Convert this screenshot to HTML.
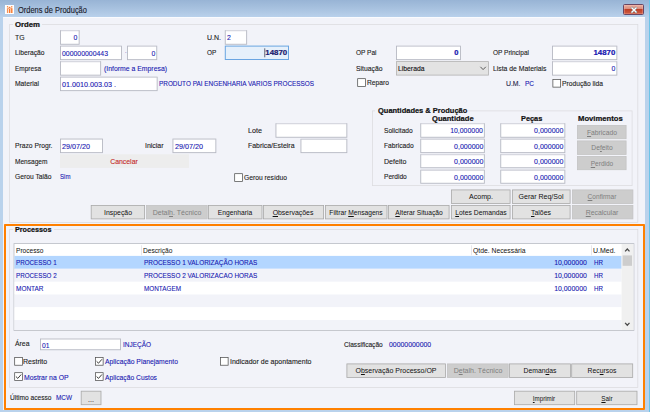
<!DOCTYPE html>
<html><head><meta charset="utf-8"><title>Ordens de Produção</title>
<style>
html,body{margin:0;padding:0;}
body{width:650px;height:412px;overflow:hidden;position:relative;background:#f2f3f9;font-family:"Liberation Sans",sans-serif;font-size:8px;line-height:10px;}
.win{position:absolute;left:0;top:0;width:650px;height:412px;background:#b9d2ec;overflow:hidden;}
.title{position:absolute;left:0;top:0;width:650px;height:17.2px;background:linear-gradient(#98b4d5,#a6c0de 45%,#b9d1eb);}
.client{position:absolute;left:3.3px;top:17.2px;width:642.2px;height:391.8px;background:#f2f3f9;border-top:0.8px solid #fafbfe;}
.redge{position:absolute;left:649px;top:0;width:1px;height:412px;background:#6cc4e8;}
.t{position:absolute;white-space:nowrap;font-size:8px;line-height:10px;-webkit-text-stroke:0.12px currentColor;}
.t u{text-decoration-thickness:0.5px;text-underline-offset:0.5px;}
.shapes{position:absolute;left:0;top:0;}
.orange{position:absolute;left:4px;top:224.4px;width:641.2px;height:185.6px;box-sizing:border-box;border:2.1px solid #ff8000;border-radius:0.8px;}
.close{position:absolute;left:623.4px;top:4px;width:20.6px;height:11.4px;box-sizing:border-box;border:0.8px solid #6b4560;border-radius:1.5px;background:linear-gradient(#eab0a2,#d98a7a 46%,#bf4027 50%,#cd5c44);box-shadow:inset 0 0 0 0.6px rgba(255,200,190,0.5);}
.icon{position:absolute;left:5px;top:4.9px;width:9.3px;height:9.1px;background:#fff;}
</style></head><body>
<div class="win">
<div class="title"></div>
<div class="client"></div><div class="redge"></div>
<div class="icon"><svg style="position:absolute;left:0;top:0" width="9.3" height="9.1" viewBox="0 0 9.3 9.1"><g fill="#f8772a"><rect x="1.9" y="1.2" width="1.3" height="1.2"/><rect x="4.0" y="1.8" width="1.3" height="1.2"/><rect x="6.1" y="1.2" width="1.3" height="1.2"/><rect x="1.9" y="3.2" width="1.4" height="4.8" opacity="0.8"/><rect x="4.0" y="3.6" width="1.4" height="4.4"/><rect x="6.1" y="3.2" width="1.4" height="4.8"/><rect x="3.0" y="2.6" width="1.2" height="1.2" opacity="0.7"/><rect x="5.2" y="2.6" width="1.2" height="1.2" opacity="0.7"/></g></svg></div>
<span class="t" style="left:17.5px;top:4.2px;font-size:9px;line-height:12px;color:#1a1a2a;transform:scaleX(0.83);transform-origin:0 50%">Ordens de Produção</span>
<div class="close"><svg style="position:absolute;left:5.6px;top:1.3px" width="8" height="8" viewBox="0 0 8 8"><path d="M1.3 1.3 L6.7 6.7 M6.7 1.3 L1.3 6.7" stroke="#777" stroke-width="2.3" fill="none"/><path d="M1.5 1.5 L6.5 6.5 M6.5 1.5 L1.5 6.5" stroke="#fff" stroke-width="1.4" fill="none"/></svg></div>
<svg class="shapes" width="650" height="412" viewBox="0 0 650 412">
<rect x="9.60" y="24.40" width="628.20" height="198.20" fill="none" stroke="#dcdce0" stroke-width="0.8"/>
<rect x="9.60" y="229.40" width="628.20" height="158.20" fill="none" stroke="#dcdce0" stroke-width="0.8"/>
<rect x="372.40" y="110.90" width="259.70" height="74.70" fill="none" stroke="#dcdce0" stroke-width="0.8"/>
<rect x="13.00" y="20.00" width="29.00" height="9.00" fill="#f2f3f9"/>
<rect x="60.45" y="30.65" width="18.70" height="13.60" fill="#fff" stroke="#b6b8c2" stroke-width="0.9"/>
<rect x="60.90" y="30.20" width="17.80" height="0.90" fill="#dcdde4"/>
<rect x="60.45" y="46.15" width="61.00" height="13.50" fill="#fff" stroke="#b6b8c2" stroke-width="0.9"/>
<rect x="60.90" y="45.70" width="60.10" height="0.90" fill="#dcdde4"/>
<rect x="127.45" y="46.15" width="29.30" height="13.50" fill="#fff" stroke="#b6b8c2" stroke-width="0.9"/>
<rect x="127.90" y="45.70" width="28.40" height="0.90" fill="#dcdde4"/>
<rect x="60.45" y="61.65" width="40.20" height="13.50" fill="#fff" stroke="#b6b8c2" stroke-width="0.9"/>
<rect x="60.90" y="61.20" width="39.30" height="0.90" fill="#dcdde4"/>
<rect x="60.45" y="77.15" width="96.70" height="13.50" fill="#fff" stroke="#b6b8c2" stroke-width="0.9"/>
<rect x="60.90" y="76.70" width="95.80" height="0.90" fill="#dcdde4"/>
<rect x="225.25" y="30.65" width="21.40" height="13.60" fill="#fff" stroke="#b6b8c2" stroke-width="0.9"/>
<rect x="225.70" y="30.20" width="20.50" height="0.90" fill="#dcdde4"/>
<rect x="225.30" y="46.10" width="63.20" height="13.40" fill="#e6f0fb" stroke="#6aa5e2" stroke-width="1.0"/>
<rect x="264.4" y="48.3" width="0.8" height="9" fill="#445"/>
<rect x="396.45" y="46.15" width="64.00" height="13.50" fill="#fff" stroke="#b6b8c2" stroke-width="0.9"/>
<rect x="396.90" y="45.70" width="63.10" height="0.90" fill="#dcdde4"/>
<rect x="396.40" y="61.60" width="92.20" height="13.50" fill="#e3e3e3" stroke="#b2b2b2" stroke-width="0.8"/>
<path d="M480.4 66.8 l2.7 2.8 l2.7 -2.8" fill="none" stroke="#5a5a5a" stroke-width="1"/>
<rect x="357.68" y="78.67" width="7.75" height="7.75" fill="#fff" stroke="#505050" stroke-width="0.75"/>
<rect x="552.45" y="46.15" width="64.40" height="13.50" fill="#fff" stroke="#b6b8c2" stroke-width="0.9"/>
<rect x="552.90" y="45.70" width="63.50" height="0.90" fill="#dcdde4"/>
<rect x="552.45" y="61.65" width="64.40" height="13.50" fill="#fff" stroke="#b6b8c2" stroke-width="0.9"/>
<rect x="552.90" y="61.20" width="63.50" height="0.90" fill="#dcdde4"/>
<rect x="552.88" y="79.38" width="7.75" height="7.75" fill="#fff" stroke="#505050" stroke-width="0.75"/>
<rect x="275.95" y="123.65" width="70.90" height="13.60" fill="#fff" stroke="#b6b8c2" stroke-width="0.9"/>
<rect x="276.40" y="123.20" width="70.00" height="0.90" fill="#dcdde4"/>
<rect x="300.95" y="139.25" width="45.90" height="13.40" fill="#fff" stroke="#b6b8c2" stroke-width="0.9"/>
<rect x="301.40" y="138.80" width="45.00" height="0.90" fill="#dcdde4"/>
<rect x="60.45" y="139.05" width="42.00" height="13.60" fill="#fff" stroke="#b6b8c2" stroke-width="0.9"/>
<rect x="60.90" y="138.60" width="41.10" height="0.90" fill="#dcdde4"/>
<rect x="172.95" y="139.05" width="42.90" height="13.60" fill="#fff" stroke="#b6b8c2" stroke-width="0.9"/>
<rect x="173.40" y="138.60" width="42.00" height="0.90" fill="#dcdde4"/>
<rect x="60.00" y="154.30" width="129.00" height="13.60" fill="#ededed"/>
<rect x="234.68" y="173.68" width="7.75" height="7.75" fill="#fff" stroke="#505050" stroke-width="0.75"/>
<rect x="375.00" y="106.00" width="93.00" height="9.00" fill="#f2f3f9"/>
<rect x="420.75" y="123.65" width="63.60" height="13.60" fill="#fff" stroke="#b6b8c2" stroke-width="0.9"/>
<rect x="421.20" y="123.20" width="62.70" height="0.90" fill="#dcdde4"/>
<rect x="500.75" y="123.65" width="64.10" height="13.60" fill="#fff" stroke="#b6b8c2" stroke-width="0.9"/>
<rect x="501.20" y="123.20" width="63.20" height="0.90" fill="#dcdde4"/>
<rect x="420.75" y="139.15" width="63.60" height="13.50" fill="#fff" stroke="#b6b8c2" stroke-width="0.9"/>
<rect x="421.20" y="138.70" width="62.70" height="0.90" fill="#dcdde4"/>
<rect x="500.75" y="139.15" width="64.10" height="13.50" fill="#fff" stroke="#b6b8c2" stroke-width="0.9"/>
<rect x="501.20" y="138.70" width="63.20" height="0.90" fill="#dcdde4"/>
<rect x="420.75" y="154.65" width="63.60" height="13.10" fill="#fff" stroke="#b6b8c2" stroke-width="0.9"/>
<rect x="421.20" y="154.20" width="62.70" height="0.90" fill="#dcdde4"/>
<rect x="500.75" y="154.65" width="64.10" height="13.10" fill="#fff" stroke="#b6b8c2" stroke-width="0.9"/>
<rect x="501.20" y="154.20" width="63.20" height="0.90" fill="#dcdde4"/>
<rect x="420.75" y="170.15" width="63.60" height="13.10" fill="#fff" stroke="#b6b8c2" stroke-width="0.9"/>
<rect x="421.20" y="169.70" width="62.70" height="0.90" fill="#dcdde4"/>
<rect x="500.75" y="170.15" width="64.10" height="13.10" fill="#fff" stroke="#b6b8c2" stroke-width="0.9"/>
<rect x="501.20" y="169.70" width="63.20" height="0.90" fill="#dcdde4"/>
<rect x="577.40" y="125.40" width="48.70" height="13.30" fill="#cdcdcd" stroke="#c3c3c3" stroke-width="0.8"/>
<rect x="577.40" y="140.90" width="48.70" height="13.50" fill="#cdcdcd" stroke="#c3c3c3" stroke-width="0.8"/>
<rect x="577.40" y="156.40" width="48.70" height="13.30" fill="#cdcdcd" stroke="#c3c3c3" stroke-width="0.8"/>
<rect x="451.40" y="189.90" width="58.70" height="13.70" fill="#e2e2e2" stroke="#a9a9a9" stroke-width="0.8"/>
<rect x="512.40" y="189.90" width="57.70" height="13.70" fill="#e2e2e2" stroke="#a9a9a9" stroke-width="0.8"/>
<rect x="572.40" y="189.90" width="60.50" height="13.70" fill="#cdcdcd" stroke="#c3c3c3" stroke-width="0.8"/>
<rect x="91.20" y="205.40" width="53.40" height="13.50" fill="#e2e2e2" stroke="#a9a9a9" stroke-width="0.8"/>
<rect x="146.40" y="205.40" width="60.80" height="13.50" fill="#cdcdcd" stroke="#c3c3c3" stroke-width="0.8"/>
<rect x="208.40" y="205.40" width="53.60" height="13.50" fill="#e2e2e2" stroke="#a9a9a9" stroke-width="0.8"/>
<rect x="263.40" y="205.40" width="60.20" height="13.50" fill="#e2e2e2" stroke="#a9a9a9" stroke-width="0.8"/>
<rect x="325.40" y="205.40" width="61.60" height="13.50" fill="#e2e2e2" stroke="#a9a9a9" stroke-width="0.8"/>
<rect x="388.40" y="205.40" width="60.70" height="13.50" fill="#e2e2e2" stroke="#a9a9a9" stroke-width="0.8"/>
<rect x="451.40" y="205.40" width="58.70" height="13.50" fill="#e2e2e2" stroke="#a9a9a9" stroke-width="0.8"/>
<rect x="512.40" y="205.40" width="57.70" height="13.50" fill="#e2e2e2" stroke="#a9a9a9" stroke-width="0.8"/>
<rect x="572.40" y="205.40" width="60.50" height="13.50" fill="#cdcdcd" stroke="#c3c3c3" stroke-width="0.8"/>
<rect x="13.00" y="226.50" width="41.00" height="6.00" fill="#f2f3f9"/>
<rect x="14.00" y="243.60" width="619.90" height="86.80" fill="#fff" stroke="#b9bcc4" stroke-width="0.8"/>
<rect x="14.40" y="255.90" width="607.20" height="12.90" fill="#b3d6ff"/>
<rect x="14.40" y="268.80" width="607.20" height="13.00" fill="#f2f3f9"/>
<rect x="14.40" y="281.80" width="607.20" height="12.70" fill="#ffffff"/>
<rect x="14.40" y="294.50" width="607.20" height="12.80" fill="#f2f3f9"/>
<rect x="14.40" y="307.30" width="607.20" height="12.70" fill="#ffffff"/>
<rect x="14.40" y="320.00" width="607.20" height="10.00" fill="#f2f3f9"/>
<rect x="141.00" y="245.30" width="0.80" height="10.00" fill="#e2e2e8"/>
<rect x="471.00" y="245.30" width="0.80" height="10.00" fill="#e2e2e8"/>
<rect x="591.00" y="245.30" width="0.80" height="10.00" fill="#e2e2e8"/>
<rect x="621.60" y="244.00" width="11.90" height="86.00" fill="#f0f0f0"/>
<rect x="622.60" y="255.40" width="9.40" height="10.40" fill="#cdcdcd"/>
<path d="M625.1 251.4 l2.2 -2.4 l2.2 2.4" fill="none" stroke="#4a4a4a" stroke-width="1.3"/>
<path d="M625.1 322.9 l2.2 2.4 l2.2 -2.4" fill="none" stroke="#4a4a4a" stroke-width="1.3"/>
<rect x="40.45" y="338.95" width="80.00" height="10.80" fill="#fff" stroke="#b6b8c2" stroke-width="0.9"/>
<rect x="40.90" y="338.50" width="79.10" height="0.90" fill="#dcdde4"/>
<rect x="14.68" y="357.48" width="7.75" height="7.75" fill="#fff" stroke="#505050" stroke-width="0.75"/>
<rect x="95.38" y="357.48" width="7.75" height="7.75" fill="#fff" stroke="#505050" stroke-width="0.75"/>
<path d="M96.60 361.30 l1.9 1.9 l3.4 -3.9" fill="none" stroke="#222" stroke-width="0.9"/>
<rect x="220.38" y="357.48" width="7.75" height="7.75" fill="#fff" stroke="#505050" stroke-width="0.75"/>
<rect x="14.68" y="372.68" width="7.75" height="7.75" fill="#fff" stroke="#505050" stroke-width="0.75"/>
<path d="M15.90 376.50 l1.9 1.9 l3.4 -3.9" fill="none" stroke="#222" stroke-width="0.9"/>
<rect x="95.38" y="372.68" width="7.75" height="7.75" fill="#fff" stroke="#505050" stroke-width="0.75"/>
<path d="M96.60 376.50 l1.9 1.9 l3.4 -3.9" fill="none" stroke="#222" stroke-width="0.9"/>
<rect x="346.90" y="363.90" width="98.70" height="13.50" fill="#e2e2e2" stroke="#a9a9a9" stroke-width="0.8"/>
<rect x="447.40" y="363.90" width="60.80" height="13.50" fill="#cdcdcd" stroke="#c3c3c3" stroke-width="0.8"/>
<rect x="509.40" y="363.90" width="61.20" height="13.50" fill="#e2e2e2" stroke="#a9a9a9" stroke-width="0.8"/>
<rect x="571.70" y="363.90" width="61.00" height="13.50" fill="#e2e2e2" stroke="#a9a9a9" stroke-width="0.8"/>
<rect x="81.20" y="391.20" width="19.80" height="13.50" fill="#e2e2e2" stroke="#a9a9a9" stroke-width="0.8"/>
<rect x="514.40" y="391.20" width="60.30" height="13.50" fill="#e2e2e2" stroke="#a9a9a9" stroke-width="0.8"/>
<rect x="576.70" y="391.20" width="60.30" height="13.50" fill="#e2e2e2" stroke="#a9a9a9" stroke-width="0.8"/>
</svg>
<span class="t" style="top:19.9px;color:#111;font-weight:bold;-webkit-text-stroke-width:0.22px;left:15px;transform:scaleX(0.969);transform-origin:0 50%;">Ordem</span>
<span class="t" style="top:32.9px;color:#1c1c1c;left:15px;transform:scaleX(0.86);transform-origin:0 50%;">TG</span>
<span class="t" style="top:48.4px;color:#1c1c1c;left:15px;transform:scaleX(0.839);transform-origin:0 50%;">Liberação</span>
<span class="t" style="top:63.8px;color:#1c1c1c;left:15px;transform:scaleX(0.812);transform-origin:0 50%;">Empresa</span>
<span class="t" style="top:79.1px;color:#1c1c1c;left:15px;transform:scaleX(0.843);transform-origin:0 50%;">Material</span>
<span class="t" style="top:33.4px;color:#1616b0;-webkit-text-stroke-width:0.1px;right:573px;transform:scaleX(0.86);transform-origin:100% 50%;">0</span>
<span class="t" style="top:48.9px;color:#1616b0;-webkit-text-stroke-width:0.1px;left:62px;transform:scaleX(0.862);transform-origin:0 50%;">000000000443</span>
<span class="t" style="top:47.9px;color:#4a3aa0;-webkit-text-stroke:0;left:124.6px;transform:scaleX(0.6);transform-origin:0 50%;">·</span>
<span class="t" style="top:48.9px;color:#1616b0;-webkit-text-stroke-width:0.1px;right:495px;transform:scaleX(0.86);transform-origin:100% 50%;">0</span>
<span class="t" style="top:63.8px;color:#1616b0;-webkit-text-stroke-width:0.1px;left:104px;transform:scaleX(0.859);transform-origin:0 50%;">(Informe a Empresa)</span>
<span class="t" style="top:79.8px;color:#1616b0;-webkit-text-stroke-width:0.1px;left:62px;transform:scaleX(0.899);transform-origin:0 50%;">01.0010.003.03 .</span>
<span class="t" style="top:79.1px;color:#1616b0;-webkit-text-stroke-width:0.1px;left:158.5px;transform:scaleX(0.8);transform-origin:0 50%;">PRODUTO PAI ENGENHARIA VARIOS PROCESSOS</span>
<span class="t" style="top:32.9px;color:#1c1c1c;left:207px;transform:scaleX(0.875);transform-origin:0 50%;">U.N.</span>
<span class="t" style="top:33.4px;color:#1616b0;-webkit-text-stroke-width:0.1px;left:227px;transform:scaleX(0.86);transform-origin:0 50%;">2</span>
<span class="t" style="top:48.4px;color:#1c1c1c;left:207px;transform:scaleX(0.804);transform-origin:0 50%;">OP</span>
<span class="t" style="top:48.2px;color:#1a1a6e;font-weight:bold;-webkit-text-stroke-width:0.22px;right:362.5px;transform:scaleX(0.989);transform-origin:100% 50%;">14870</span>
<span class="t" style="top:48.4px;color:#1c1c1c;left:355.5px;transform:scaleX(0.813);transform-origin:0 50%;">OP Pai</span>
<span class="t" style="top:48.4px;color:#1616b0;font-weight:bold;-webkit-text-stroke-width:0.22px;right:191.3px;transform:scaleX(0.94);transform-origin:100% 50%;">0</span>
<span class="t" style="top:63.8px;color:#1c1c1c;left:355.5px;transform:scaleX(0.851);transform-origin:0 50%;">Situação</span>
<span class="t" style="top:63.8px;color:#111;left:398px;transform:scaleX(0.851);transform-origin:0 50%;">Liberada</span>
<span class="t" style="top:78.1px;color:#1c1c1c;left:367px;transform:scaleX(0.838);transform-origin:0 50%;">Reparo</span>
<span class="t" style="top:48.4px;color:#1c1c1c;left:492.5px;transform:scaleX(0.812);transform-origin:0 50%;">OP Principal</span>
<span class="t" style="top:48.4px;color:#1616b0;font-weight:bold;-webkit-text-stroke-width:0.22px;right:35px;transform:scaleX(0.98);transform-origin:100% 50%;">14870</span>
<span class="t" style="top:63.8px;color:#1c1c1c;left:492.5px;transform:scaleX(0.853);transform-origin:0 50%;">Lista de Materiais</span>
<span class="t" style="top:64.3px;color:#1616b0;-webkit-text-stroke-width:0.1px;right:35px;transform:scaleX(0.86);transform-origin:100% 50%;">0</span>
<span class="t" style="top:79.1px;color:#26264a;left:505.8px;transform:scaleX(0.858);transform-origin:0 50%;">U.M.</span>
<span class="t" style="top:79.1px;color:#1616b0;-webkit-text-stroke-width:0.1px;left:524.5px;transform:scaleX(0.809);transform-origin:0 50%;">PC</span>
<span class="t" style="top:78.9px;color:#1c1c1c;left:562px;transform:scaleX(0.838);transform-origin:0 50%;">Produção lida</span>
<span class="t" style="top:125.9px;color:#1c1c1c;left:248px;transform:scaleX(0.899);transform-origin:0 50%;">Lote</span>
<span class="t" style="top:141.3px;color:#1c1c1c;left:248px;transform:scaleX(0.864);transform-origin:0 50%;">Fabrica/Esteira</span>
<span class="t" style="top:141.3px;color:#1c1c1c;left:15px;transform:scaleX(0.843);transform-origin:0 50%;">Prazo Progr.</span>
<span class="t" style="top:141.8px;color:#1616b0;-webkit-text-stroke-width:0.1px;left:62px;transform:scaleX(0.899);transform-origin:0 50%;">29/07/20</span>
<span class="t" style="top:141.3px;color:#1c1c1c;left:144.5px;transform:scaleX(0.867);transform-origin:0 50%;">Iniciar</span>
<span class="t" style="top:141.8px;color:#1616b0;-webkit-text-stroke-width:0.1px;left:174.7px;transform:scaleX(0.899);transform-origin:0 50%;">29/07/20</span>
<span class="t" style="top:156.6px;color:#1c1c1c;left:15px;transform:scaleX(0.821);transform-origin:0 50%;">Mensagem</span>
<span class="t" style="top:156.6px;color:#c42a2a;left:-26px;width:300px;text-align:center;transform:scaleX(0.859);transform-origin:50% 50%;">Cancelar</span>
<span class="t" style="top:171.9px;color:#1c1c1c;left:15px;transform:scaleX(0.84);transform-origin:0 50%;">Gerou Talão</span>
<span class="t" style="top:171.9px;color:#1616b0;-webkit-text-stroke-width:0.1px;left:59.5px;transform:scaleX(0.762);transform-origin:0 50%;">Sim</span>
<span class="t" style="top:173.4px;color:#1c1c1c;left:243.7px;transform:scaleX(0.841);transform-origin:0 50%;">Gerou resíduo</span>
<span class="t" style="top:106.4px;color:#111;font-weight:bold;-webkit-text-stroke-width:0.22px;left:377.6px;transform:scaleX(0.934);transform-origin:0 50%;">Quantidades &amp; Produção</span>
<span class="t" style="top:114.4px;color:#111;font-weight:bold;-webkit-text-stroke-width:0.22px;left:431.8px;transform:scaleX(0.947);transform-origin:0 50%;">Quantidade</span>
<span class="t" style="top:114.4px;color:#111;font-weight:bold;-webkit-text-stroke-width:0.22px;left:521.3px;transform:scaleX(0.92);transform-origin:0 50%;">Peças</span>
<span class="t" style="top:114.4px;color:#111;font-weight:bold;-webkit-text-stroke-width:0.22px;left:577.8px;transform:scaleX(0.958);transform-origin:0 50%;">Movimentos</span>
<span class="t" style="top:125.8px;color:#1c1c1c;left:384px;transform:scaleX(0.827);transform-origin:0 50%;">Solicitado</span>
<span class="t" style="top:126.3px;color:#1616b0;-webkit-text-stroke-width:0.1px;right:167.10000000000002px;transform:scaleX(0.864);transform-origin:100% 50%;">10,000000</span>
<span class="t" style="top:126.3px;color:#1616b0;-webkit-text-stroke-width:0.1px;right:86.60000000000002px;transform:scaleX(0.878);transform-origin:100% 50%;">0,000000</span>
<span class="t" style="top:141.3px;color:#1c1c1c;left:384px;transform:scaleX(0.835);transform-origin:0 50%;">Fabricado</span>
<span class="t" style="top:141.8px;color:#1616b0;-webkit-text-stroke-width:0.1px;right:167.10000000000002px;transform:scaleX(0.878);transform-origin:100% 50%;">0,000000</span>
<span class="t" style="top:141.8px;color:#1616b0;-webkit-text-stroke-width:0.1px;right:86.60000000000002px;transform:scaleX(0.878);transform-origin:100% 50%;">0,000000</span>
<span class="t" style="top:156.6px;color:#1c1c1c;left:384px;transform:scaleX(0.883);transform-origin:0 50%;">Defeito</span>
<span class="t" style="top:157.1px;color:#1616b0;-webkit-text-stroke-width:0.1px;right:167.10000000000002px;transform:scaleX(0.878);transform-origin:100% 50%;">0,000000</span>
<span class="t" style="top:157.1px;color:#1616b0;-webkit-text-stroke-width:0.1px;right:86.60000000000002px;transform:scaleX(0.878);transform-origin:100% 50%;">0,000000</span>
<span class="t" style="top:172.1px;color:#1c1c1c;left:384px;transform:scaleX(0.827);transform-origin:0 50%;">Perdido</span>
<span class="t" style="top:172.6px;color:#1616b0;-webkit-text-stroke-width:0.1px;right:167.10000000000002px;transform:scaleX(0.878);transform-origin:100% 50%;">0,000000</span>
<span class="t" style="top:172.6px;color:#1616b0;-webkit-text-stroke-width:0.1px;right:86.60000000000002px;transform:scaleX(0.878);transform-origin:100% 50%;">0,000000</span>
<span class="t" style="top:127.8px;color:#7e7e7e;-webkit-text-stroke:0;left:451.54999999999995px;width:300px;text-align:center;transform:scaleX(0.843);transform-origin:50% 50%;"><u>F</u>abricado</span>
<span class="t" style="top:143.3px;color:#7e7e7e;-webkit-text-stroke:0;left:451.54999999999995px;width:300px;text-align:center;transform:scaleX(0.838);transform-origin:50% 50%;">De<u>f</u>eito</span>
<span class="t" style="top:158.8px;color:#7e7e7e;-webkit-text-stroke:0;left:451.54999999999995px;width:300px;text-align:center;transform:scaleX(0.816);transform-origin:50% 50%;"><u>P</u>erdido</span>
<span class="t" style="top:192.4px;color:#111;-webkit-text-stroke:0;left:330.55px;width:300px;text-align:center;transform:scaleX(0.885);transform-origin:50% 50%;">Acomp.</span>
<span class="t" style="top:192.4px;color:#111;-webkit-text-stroke:0;left:391.04999999999995px;width:300px;text-align:center;transform:scaleX(0.88);transform-origin:50% 50%;">Gerar Req/Sol</span>
<span class="t" style="top:192.4px;color:#7e7e7e;-webkit-text-stroke:0;left:452.44999999999993px;width:300px;text-align:center;transform:scaleX(0.819);transform-origin:50% 50%;"><u>C</u>onfirmar</span>
<span class="t" style="top:207.8px;color:#111;-webkit-text-stroke:0;left:-32.3px;width:300px;text-align:center;transform:scaleX(0.862);transform-origin:50% 50%;">Inspeção</span>
<span class="t" style="top:207.8px;color:#7e7e7e;-webkit-text-stroke:0;left:26.600000000000023px;width:300px;text-align:center;transform:scaleX(0.877);transform-origin:50% 50%;">Detal<u>h</u>. Técnico</span>
<span class="t" style="top:207.8px;color:#111;-webkit-text-stroke:0;left:85.00000000000003px;width:300px;text-align:center;transform:scaleX(0.837);transform-origin:50% 50%;">En<u>g</u>enharia</span>
<span class="t" style="top:207.8px;color:#111;-webkit-text-stroke:0;left:143.3px;width:300px;text-align:center;transform:scaleX(0.864);transform-origin:50% 50%;"><u>O</u>bservações</span>
<span class="t" style="top:207.8px;color:#111;-webkit-text-stroke:0;left:206.00000000000006px;width:300px;text-align:center;transform:scaleX(0.832);transform-origin:50% 50%;">Filtrar <u>M</u>ensagens</span>
<span class="t" style="top:207.8px;color:#111;-webkit-text-stroke:0;left:268.55px;width:300px;text-align:center;transform:scaleX(0.83);transform-origin:50% 50%;"><u>A</u>lterar Situação</span>
<span class="t" style="top:207.8px;color:#111;-webkit-text-stroke:0;left:330.55px;width:300px;text-align:center;transform:scaleX(0.851);transform-origin:50% 50%;"><u>L</u>otes Demandas</span>
<span class="t" style="top:207.8px;color:#111;-webkit-text-stroke:0;left:391.04999999999995px;width:300px;text-align:center;transform:scaleX(0.865);transform-origin:50% 50%;"><u>T</u>alões</span>
<span class="t" style="top:207.8px;color:#7e7e7e;-webkit-text-stroke:0;left:452.44999999999993px;width:300px;text-align:center;transform:scaleX(0.86);transform-origin:50% 50%;"><u>R</u>ecalcular</span>
<span class="t" style="top:225.2px;color:#111;font-weight:bold;-webkit-text-stroke-width:0.22px;left:15px;transform:scaleX(0.902);transform-origin:0 50%;">Processos</span>
<span class="t" style="top:245.9px;color:#111;-webkit-text-stroke:0;left:16px;transform:scaleX(0.824);transform-origin:0 50%;">Processo</span>
<span class="t" style="top:245.9px;color:#111;-webkit-text-stroke:0;left:143px;transform:scaleX(0.829);transform-origin:0 50%;">Descrição</span>
<span class="t" style="top:245.9px;color:#111;-webkit-text-stroke:0;left:473px;transform:scaleX(0.849);transform-origin:0 50%;">Qtde. Necessária</span>
<span class="t" style="top:245.9px;color:#111;-webkit-text-stroke:0;left:593px;transform:scaleX(0.872);transform-origin:0 50%;">U.Med.</span>
<span class="t" style="top:258.1px;color:#1616b0;-webkit-text-stroke-width:0.1px;left:16px;transform:scaleX(0.782);transform-origin:0 50%;">PROCESSO 1</span>
<span class="t" style="top:258.1px;color:#1616b0;-webkit-text-stroke-width:0.1px;left:143.5px;transform:scaleX(0.802);transform-origin:0 50%;">PROCESSO 1 VALORIZAÇÃO HORAS</span>
<span class="t" style="top:258.1px;color:#1616b0;-webkit-text-stroke-width:0.1px;right:63px;transform:scaleX(0.864);transform-origin:100% 50%;">10,000000</span>
<span class="t" style="top:258.1px;color:#1616b0;-webkit-text-stroke-width:0.1px;left:594px;transform:scaleX(0.778);transform-origin:0 50%;">HR</span>
<span class="t" style="top:270.9px;color:#1616b0;-webkit-text-stroke-width:0.1px;left:16px;transform:scaleX(0.782);transform-origin:0 50%;">PROCESSO 2</span>
<span class="t" style="top:270.9px;color:#1616b0;-webkit-text-stroke-width:0.1px;left:143.5px;transform:scaleX(0.802);transform-origin:0 50%;">PROCESSO 2 VALORIZACAO HORAS</span>
<span class="t" style="top:270.9px;color:#1616b0;-webkit-text-stroke-width:0.1px;right:63px;transform:scaleX(0.864);transform-origin:100% 50%;">10,000000</span>
<span class="t" style="top:270.9px;color:#1616b0;-webkit-text-stroke-width:0.1px;left:594px;transform:scaleX(0.778);transform-origin:0 50%;">HR</span>
<span class="t" style="top:283.8px;color:#1616b0;-webkit-text-stroke-width:0.1px;left:16px;transform:scaleX(0.807);transform-origin:0 50%;">MONTAR</span>
<span class="t" style="top:283.8px;color:#1616b0;-webkit-text-stroke-width:0.1px;left:143.5px;transform:scaleX(0.795);transform-origin:0 50%;">MONTAGEM</span>
<span class="t" style="top:283.8px;color:#1616b0;-webkit-text-stroke-width:0.1px;right:63px;transform:scaleX(0.864);transform-origin:100% 50%;">10,000000</span>
<span class="t" style="top:283.8px;color:#1616b0;-webkit-text-stroke-width:0.1px;left:594px;transform:scaleX(0.778);transform-origin:0 50%;">HR</span>
<span class="t" style="top:338.9px;color:#1c1c1c;left:14.5px;transform:scaleX(0.858);transform-origin:0 50%;">Área</span>
<span class="t" style="top:340.6px;color:#1616b0;-webkit-text-stroke-width:0.1px;left:42px;transform:scaleX(0.842);transform-origin:0 50%;">01</span>
<span class="t" style="top:339.8px;color:#1616b0;-webkit-text-stroke-width:0.1px;left:122.5px;transform:scaleX(0.808);transform-origin:0 50%;">INJEÇÃO</span>
<span class="t" style="top:339.8px;color:#1c1c1c;left:344.3px;transform:scaleX(0.821);transform-origin:0 50%;">Classificação</span>
<span class="t" style="top:339.8px;color:#1616b0;-webkit-text-stroke-width:0.1px;left:389.3px;transform:scaleX(0.862);transform-origin:0 50%;">00000000000</span>
<span class="t" style="top:357.0px;color:#1c1c1c;left:23.3px;transform:scaleX(0.878);transform-origin:0 50%;">Restrito</span>
<span class="t" style="top:357.2px;color:#1616b0;-webkit-text-stroke-width:0.1px;left:104.5px;transform:scaleX(0.85);transform-origin:0 50%;">Aplicação Planejamento</span>
<span class="t" style="top:357.0px;color:#1c1c1c;left:229.5px;transform:scaleX(0.877);transform-origin:0 50%;">Indicador de apontamento</span>
<span class="t" style="top:372.6px;color:#1616b0;-webkit-text-stroke-width:0.1px;left:23.5px;transform:scaleX(0.856);transform-origin:0 50%;">Mostrar na OP</span>
<span class="t" style="top:372.6px;color:#1616b0;-webkit-text-stroke-width:0.1px;left:104.5px;transform:scaleX(0.841);transform-origin:0 50%;">Aplicação Custos</span>
<span class="t" style="top:366.4px;color:#111;-webkit-text-stroke:0;left:246.05px;width:300px;text-align:center;transform:scaleX(0.876);transform-origin:50% 50%;">O<u>b</u>servação Processo/OP</span>
<span class="t" style="top:366.4px;color:#7e7e7e;-webkit-text-stroke:0;left:327.6px;width:300px;text-align:center;transform:scaleX(0.877);transform-origin:50% 50%;">D<u>e</u>talh. Técnico</span>
<span class="t" style="top:366.4px;color:#111;-webkit-text-stroke:0;left:389.79999999999995px;width:300px;text-align:center;transform:scaleX(0.853);transform-origin:50% 50%;">Deman<u>d</u>as</span>
<span class="t" style="top:366.4px;color:#111;-webkit-text-stroke:0;left:451.9999999999999px;width:300px;text-align:center;transform:scaleX(0.851);transform-origin:50% 50%;">Rec<u>u</u>rsos</span>
<span class="t" style="top:392.9px;color:#1c1c1c;left:10px;transform:scaleX(0.826);transform-origin:0 50%;">Último acesso</span>
<span class="t" style="top:392.9px;color:#1616b0;-webkit-text-stroke-width:0.1px;left:56px;transform:scaleX(0.8);transform-origin:0 50%;">MCW</span>
<span class="t" style="top:394.7px;color:#111;-webkit-text-stroke:0;left:-59.10000000000001px;width:300px;text-align:center;transform:scaleX(0.88);transform-origin:50% 50%;">...</span>
<span class="t" style="top:393.7px;color:#111;-webkit-text-stroke:0;left:394.3499999999999px;width:300px;text-align:center;transform:scaleX(0.77);transform-origin:50% 50%;"><u>I</u>mprimir</span>
<span class="t" style="top:393.7px;color:#111;-webkit-text-stroke:0;left:456.64999999999986px;width:300px;text-align:center;transform:scaleX(0.79);transform-origin:50% 50%;"><u>S</u>air</span>
<div class="orange"></div>
</div>
</body></html>
